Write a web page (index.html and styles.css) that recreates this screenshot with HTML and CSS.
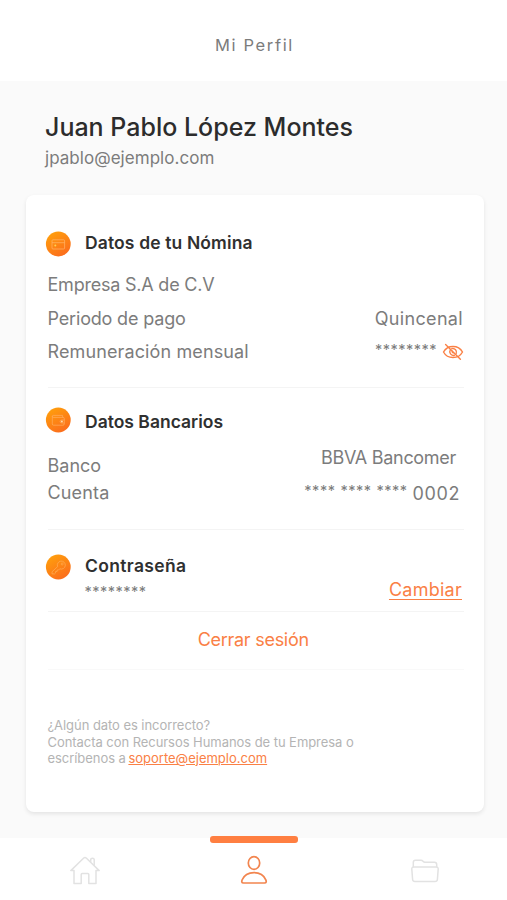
FILE: index.html
```html
<!DOCTYPE html>
<html lang="es">
<head>
<meta charset="utf-8">
<meta name="viewport" content="width=device-width, initial-scale=1">
<title>Mi Perfil</title>
<link rel="stylesheet" href="styles.css">
</head>
<body>
<header class="topbar"><h1 class="topbar-title">Mi Perfil</h1></header>
<main class="main">
  <div class="person">
    <h2 class="name">Juan Pablo López Montes</h2>
    <p class="email">jpablo@ejemplo.com</p>
  </div>
  <div class="card">
    <section class="section payroll">
      <div class="heading">
        <svg class="badge" viewBox="0 0 26 26">
          <defs><linearGradient id="warm" x1="0.2" y1="0" x2="0.8" y2="1"><stop offset="0" stop-color="#ffa00c"/><stop offset="1" stop-color="#fb6a1e"/></linearGradient></defs>
          <circle cx="13.3" cy="13" r="12.4" fill="url(#warm)"/>
          <g fill="none" stroke="#ffb56c" stroke-width=".7"><rect x="7" y="8.8" width="12.6" height="9.2" rx="1"/><path d="M7 11.7h12.6"/></g>
          <circle cx="10.3" cy="14.6" r="1" fill="#ffd34e"/>
        </svg>
        <h3 class="title t-nomina">Datos de tu Nómina</h3>
      </div>
      <div class="row r-company"><span class="w-company">Empresa S.A de C.V</span></div>
      <div class="row r-period"><span class="w-period">Periodo de pago</span><span class="w-biweekly">Quincenal</span></div>
      <div class="row r-salary"><span class="w-salary">Remuneración mensual</span>
        <span class="hidden-value"><span class="stars">********</span>
          <svg class="eye" viewBox="0 0 22 18" fill="none" stroke="#fa8045" stroke-width="1.4" stroke-linecap="round">
            <path d="M1.500 9C5.500 1.600 16.500 1.600 20.500 9C16.500 16.400 5.500 16.400 1.500 9Z"/><path d="M8.300 6.800A3.700 3.700 0 0 0 12.400 12.300M9.800 5.600A3.700 3.700 0 0 1 14.200 10.600M10.300 8.400A1 1 0 0 0 11.300 9.800"/><path d="M3.600 1.600L18.400 16.200"/>
          </svg>
        </span>
      </div>
    </section>
    <section class="section bank">
      <div class="heading">
        <svg class="badge" viewBox="0 0 26 26">
          <circle cx="13.3" cy="13" r="12.4" fill="url(#warm)"/>
          <path d="M7.300 9.300V16.900a1.300 1.300 0 0 0 1.300 1.300h9.400a1.300 1.300 0 0 0 1.300-1.300v-5.200a1.300 1.300 0 0 0-1.300-1.300H8.300a1 1 0 0 1 0-2H17.600V10.400M19.300 13h-2.700a1.500 1.500 0 0 0 0 3H19.300" fill="none" stroke="#ffae62" stroke-width=".7"/>
          <circle cx="16.900" cy="14.500" r=".9" fill="#ffe0b8"/>
        </svg>
        <h3 class="title t-bank">Datos Bancarios</h3>
      </div>
      <div class="bank-grid">
        <div class="bank-labels"><span class="w-bank">Banco</span><span class="w-account">Cuenta</span></div>
        <div class="bank-values">
          <span class="w-bbva">BBVA Bancomer</span>
          <span class="account"><span class="stars">****</span><span class="stars">****</span><span class="stars">****</span><span class="digits">0002</span></span>
        </div>
      </div>
    </section>
    <section class="section password">
      <div class="heading">
        <svg class="badge" viewBox="0 0 26 26">
          <circle cx="13.3" cy="13" r="12.4" fill="url(#warm)"/>
          <path d="M12.600 12.600a4 4 0 1 1 2.200 2.200L13.600 16h-1.500v1.500H10.600v1.500l-1 .900H7V17.800Z" fill="none" stroke="#ffae58" stroke-width=".7"/><circle cx="17.200" cy="10" r="1" fill="none" stroke="#ffae58" stroke-width=".6"/>
        </svg>
        <h3 class="title t-pass">Contraseña</h3>
      </div>
      <div class="pass-row"><span class="stars">********</span><a class="change" href="#">Cambiar</a></div>
    </section>
    <div class="logout"><a class="logout-link" href="#">Cerrar sesión</a></div>
    <p class="help">¿Algún dato es incorrecto?<br>Contacta con Recursos Humanos de tu Empresa o<br>escríbenos a <a class="mail" href="#">soporte@ejemplo.com</a></p>
  </div>
</main>
<nav class="tabs">
  <a class="tab home" href="#"><svg class="tab-icon" viewBox="0 0 32 32" fill="none" stroke="#e2e2e2" stroke-width="1.500" stroke-linejoin="round" stroke-linecap="round"><path d="M1.800 15.600L14.500 3.200Q16 1.900 17.500 3.200L30.200 15.600H27V28.600H19.800V19.500Q19.800 18.500 18.800 18.500H13.200Q12.200 18.500 12.200 19.500V28.600H5V15.600Z"/><path d="M21.700 6.500V4.500Q21.700 3.300 23.400 3.300T25.200 4.500V10.200"/></svg></a>
  <a class="tab active" href="#"><svg class="tab-icon" viewBox="0 0 32 32" fill="none" stroke="#f2854f" stroke-width="1.700" stroke-linejoin="round"><ellipse cx="16" cy="9" rx="5.700" ry="6.300"/><path d="M5.500 29C3.500 29 3.500 27.500 4.200 25.800C6.200 21 11 18.600 16 18.600S25.800 21 27.800 25.800C28.500 27.500 28.500 29 26.500 29Z"/></svg></a>
  <a class="tab files" href="#"><svg class="tab-icon" viewBox="0 0 32 32" fill="none" stroke="#e2e2e2" stroke-width="1.500" stroke-linejoin="round"><path d="M4.300 12V7.500Q4.300 5.300 6.500 5.300H12Q13.200 5.300 14 6.200T16 7.200H25.500Q27.700 7.200 27.700 9.500V12"/><path d="M5 12H27Q29.300 12 29.200 14L28.400 24.500Q28.200 26.500 26 26.500H6Q3.800 26.500 3.600 24.500L2.800 14Q2.700 12 5 12Z"/></svg></a>
</nav>
</body>
</html>
```

FILE: styles.css
```css
* { box-sizing: border-box; }
body { margin: 0; width: 507px; height: 900px; display: flex; flex-direction: column; overflow: hidden; background: #fff; font-family: Inter, "Liberation Sans", sans-serif; color: #7c7c7c; }
h1, h2, h3, p { margin: 0; font-weight: 400; white-space: nowrap; }
a { color: #fa8045; text-decoration: none; }
svg { display: block; flex: none; }
span { white-space: nowrap; }

.topbar { height: 81px; padding-top: 33px; display: flex; justify-content: center; }
.topbar-title { font-size: 16.5px; line-height: 24px; letter-spacing: 1.65px; padding-left: 2px; }
.main { height: 757px; background: #fafafa; padding: 0 23px 0 26px; }
.person { height: 114px; padding: 30px 0 0 19px; }
.name { font-size: 25px; line-height: 32px; font-weight: 550; letter-spacing: 0; color: #2c2c2c; }
.email { font-size: 17px; line-height: 24px; padding-top: 3px; letter-spacing: .04px; }

.card { height: 617px; background: #fff; border-radius: 8px; box-shadow: 0 2px 4px rgba(0, 0, 0, .09); padding: 0 20px 0 21.5px; font-size: 18px; line-height: 24px; }
.section { border-bottom: 1px solid #f4f4f4; }
.payroll { height: 193px; padding-top: 36px; }
.bank { height: 142px; padding-top: 19px; }
.password { height: 82px; padding-top: 24px; }
.heading { height: 26px; margin-left: -2.5px; display: flex; gap: 14px; align-items: center; }
.badge { width: 26px; height: 26px; }
.title { font-size: 17.5px; line-height: 24px; font-weight: 560; color: #303030; }
.t-nomina { padding-bottom: 2px; letter-spacing: .13px; }
.t-bank { padding-top: 4px; letter-spacing: 0; }
.t-pass { padding-bottom: 2px; letter-spacing: .35px; }

.row { display: flex; justify-content: space-between; align-items: center; height: 33px; }
.r-company { margin-top: 11px; height: 34px; }
.r-period { padding-right: 1px; }
.r-salary { height: 34px; }
.hidden-value { display: flex; align-items: center; gap: 5px; }
.stars { font-size: 14.5px; line-height: 18px; letter-spacing: .5px; }
.hidden-value .stars { padding-bottom: 4px; }
.eye { width: 22px; height: 18px; }
.w-company { letter-spacing: -.22px; }
.w-period { letter-spacing: -.17px; }
.w-salary { letter-spacing: .12px; }
.w-biweekly { letter-spacing: .33px; }
.w-bbva { letter-spacing: -.3px; padding-right: 4px; }
.digits { letter-spacing: .6px; }

.bank-grid { display: flex; justify-content: space-between; }
.bank-labels { display: flex; flex-direction: column; gap: 3px; padding-top: 21px; }
.w-account { letter-spacing: .15px; }
.bank-values { display: flex; flex-direction: column; align-items: flex-end; gap: 12px; padding: 13px 4px 0 0; }
.account { display: flex; gap: 5px; }

.pass-row { display: flex; justify-content: space-between; padding: 0 2px 0 37px; }
.pass-row .stars { padding-top: 3px; }
.change { margin-top: -2px; letter-spacing: .25px; text-decoration: underline; text-decoration-thickness: 1px; text-underline-offset: 3px; }
.logout { height: 58px; border-bottom: 1px solid #f9f9f9; display: flex; justify-content: center; align-items: center; padding: 0 5px 2px 0; }
.logout-link { letter-spacing: -.27px; }
.help { margin-top: 47px; font-size: 13px; line-height: 16.7px; letter-spacing: -.055px; color: #b4b4b4; }
.mail { margin-left: -1px; letter-spacing: 0; text-decoration: underline; text-decoration-thickness: 1px; text-underline-offset: 1px; }

.tabs { height: 62px; display: grid; grid-template-columns: 1fr 1fr 1fr; background: #fff; }
.tab { position: relative; display: flex; justify-content: center; padding-top: 16px; }
.home { padding-top: 17px; }
.files { padding: 17px 0 0 4px; }
.tab-icon { width: 32px; height: 32px; }
.active::before { content: ""; position: absolute; top: -2px; left: 41px; width: 88px; height: 6.5px; border-radius: 3px; background: #ff7f41; }
```
